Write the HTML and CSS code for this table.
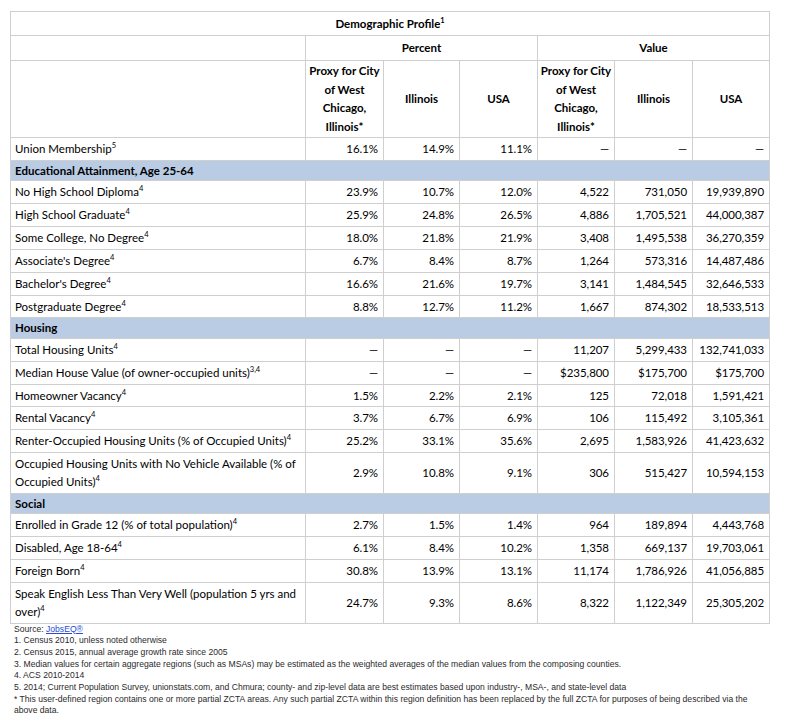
FILE: index.html
```html
<!DOCTYPE html>
<html>
<head>
<meta charset="utf-8">
<link rel="stylesheet" href="styles.css">
</head>
<body>
<div class="wrap">
<table class="profile">
  <colgroup>
    <col class="c-label"><col class="c-a"><col class="c-b"><col class="c-a"><col class="c-c"><col class="c-a"><col class="c-c">
  </colgroup>
  <tr class="title-row"><th colspan="7">Demographic Profile<sup>1</sup></th></tr>
  <tr class="group-row"><th></th><th colspan="3">Percent</th><th colspan="3">Value</th></tr>
  <tr class="head-row">
    <th></th>
    <th>Proxy for City<br>of West<br>Chicago,<br>Illinois*</th>
    <th>Illinois</th>
    <th>USA</th>
    <th>Proxy for City<br>of West<br>Chicago,<br>Illinois*</th>
    <th>Illinois</th>
    <th>USA</th>
  </tr>
  <tr><td>Union Membership<sup>5</sup></td><td>16.1%</td><td>14.9%</td><td>11.1%</td><td>—</td><td>—</td><td>—</td></tr>
  <tr class="section"><td colspan="7">Educational Attainment, Age 25-64</td></tr>
  <tr><td>No High School Diploma<sup>4</sup></td><td>23.9%</td><td>10.7%</td><td>12.0%</td><td>4,522</td><td>731,050</td><td>19,939,890</td></tr>
  <tr><td>High School Graduate<sup>4</sup></td><td>25.9%</td><td>24.8%</td><td>26.5%</td><td>4,886</td><td>1,705,521</td><td>44,000,387</td></tr>
  <tr><td>Some College, No Degree<sup>4</sup></td><td>18.0%</td><td>21.8%</td><td>21.9%</td><td>3,408</td><td>1,495,538</td><td>36,270,359</td></tr>
  <tr><td>Associate's Degree<sup>4</sup></td><td>6.7%</td><td>8.4%</td><td>8.7%</td><td>1,264</td><td>573,316</td><td>14,487,486</td></tr>
  <tr><td>Bachelor's Degree<sup>4</sup></td><td>16.6%</td><td>21.6%</td><td>19.7%</td><td>3,141</td><td>1,484,545</td><td>32,646,533</td></tr>
  <tr><td>Postgraduate Degree<sup>4</sup></td><td>8.8%</td><td>12.7%</td><td>11.2%</td><td>1,667</td><td>874,302</td><td>18,533,513</td></tr>
  <tr class="section"><td colspan="7">Housing</td></tr>
  <tr><td>Total Housing Units<sup>4</sup></td><td>—</td><td>—</td><td>—</td><td>11,207</td><td>5,299,433</td><td>132,741,033</td></tr>
  <tr><td>Median House Value (of owner-occupied units)<sup>3,4</sup></td><td>—</td><td>—</td><td>—</td><td>$235,800</td><td>$175,700</td><td>$175,700</td></tr>
  <tr><td>Homeowner Vacancy<sup>4</sup></td><td>1.5%</td><td>2.2%</td><td>2.1%</td><td>125</td><td>72,018</td><td>1,591,421</td></tr>
  <tr><td>Rental Vacancy<sup>4</sup></td><td>3.7%</td><td>6.7%</td><td>6.9%</td><td>106</td><td>115,492</td><td>3,105,361</td></tr>
  <tr><td>Renter-Occupied Housing Units (% of Occupied Units)<sup>4</sup></td><td>25.2%</td><td>33.1%</td><td>35.6%</td><td>2,695</td><td>1,583,926</td><td>41,423,632</td></tr>
  <tr><td>Occupied Housing Units with No Vehicle Available (% of<br>Occupied Units)<sup>4</sup></td><td>2.9%</td><td>10.8%</td><td>9.1%</td><td>306</td><td>515,427</td><td>10,594,153</td></tr>
  <tr class="section"><td colspan="7">Social</td></tr>
  <tr><td>Enrolled in Grade 12 (% of total population)<sup>4</sup></td><td>2.7%</td><td>1.5%</td><td>1.4%</td><td>964</td><td>189,894</td><td>4,443,768</td></tr>
  <tr><td>Disabled, Age 18-64<sup>4</sup></td><td>6.1%</td><td>8.4%</td><td>10.2%</td><td>1,358</td><td>669,137</td><td>19,703,061</td></tr>
  <tr><td>Foreign Born<sup>4</sup></td><td>30.8%</td><td>13.9%</td><td>13.1%</td><td>11,174</td><td>1,786,926</td><td>41,056,885</td></tr>
  <tr><td>Speak English Less Than Very Well (population 5 yrs and<br>over)<sup>4</sup></td><td>24.7%</td><td>9.3%</td><td>8.6%</td><td>8,322</td><td>1,122,349</td><td>25,305,202</td></tr>
</table>
<div class="notes">
  <p>Source: <a href="#">JobsEQ®</a></p>
  <p>1. Census 2010, unless noted otherwise</p>
  <p>2. Census 2015, annual average growth rate since 2005</p>
  <p>3. Median values for certain aggregate regions (such as MSAs) may be estimated as the weighted averages of the median values from the composing counties.</p>
  <p>4. ACS 2010-2014</p>
  <p>5. 2014; Current Population Survey, unionstats.com, and Chmura; county- and zip-level data are best estimates based upon industry-, MSA-, and state-level data</p>
  <p>* This user-defined region contains one or more partial ZCTA areas. Any such partial ZCTA within this region definition has been replaced by the full ZCTA for purposes of being described via the<br>above data.</p>
</div>
</div>
</body>
</html>
```
FILE: styles.css
```css
html, body {
  margin: 0;
  padding: 0;
  background: #fff;
}
.wrap {
  padding: 11px 0 0 10px;
  width: 760px;
}
.profile {
  border-collapse: collapse;
  table-layout: fixed;
  width: 760px;
  font-family: Lato, "Open Sans", sans-serif;
  font-size: 11.5px;
  color: #000;
}
.c-label { width: 295px; }
.c-a { width: 78px; }
.c-b { width: 76px; }
.c-c { width: 77px; }
.profile th,
.profile td {
  border: 1px solid #cfcfcf;
  padding: 2px 5px 2px 4px;
  line-height: 17.85px;
  vertical-align: middle;
  white-space: nowrap;
}
.profile td {
  text-align: right;
  font-weight: 400;
  letter-spacing: -0.05px;
}
.profile td:first-child {
  text-align: left;
  letter-spacing: 0;
}
.profile th {
  font-weight: 700;
  text-align: center;
}
.title-row th {
  height: 19px;
  padding: 2px 4px 2px;
}
.group-row th {
  height: 20px;
  padding: 2px 4px 2px;
}
.head-row th {
  line-height: 18.5px;
  padding: 1px 2px 1px;
}
.profile sup {
  font-size: 7.5px;
  line-height: 0;
  vertical-align: 5px;
  letter-spacing: 0;
}
.profile .section td {
  background: #b9cce4;
  font-weight: 700;
  font-size: 11.5px;
  line-height: 15.5px;
  text-align: left;
}
.notes {
  font-family: "Liberation Sans", Arial, sans-serif;
  font-size: 8.6px;
  line-height: 11.7px;
  color: #2a2a2a;
  padding: 0 0 0 4px;
}
.notes p {
  margin: 0;
  white-space: nowrap;
}
.notes a {
  color: #2a4bd7;
  text-decoration: underline;
}
```
